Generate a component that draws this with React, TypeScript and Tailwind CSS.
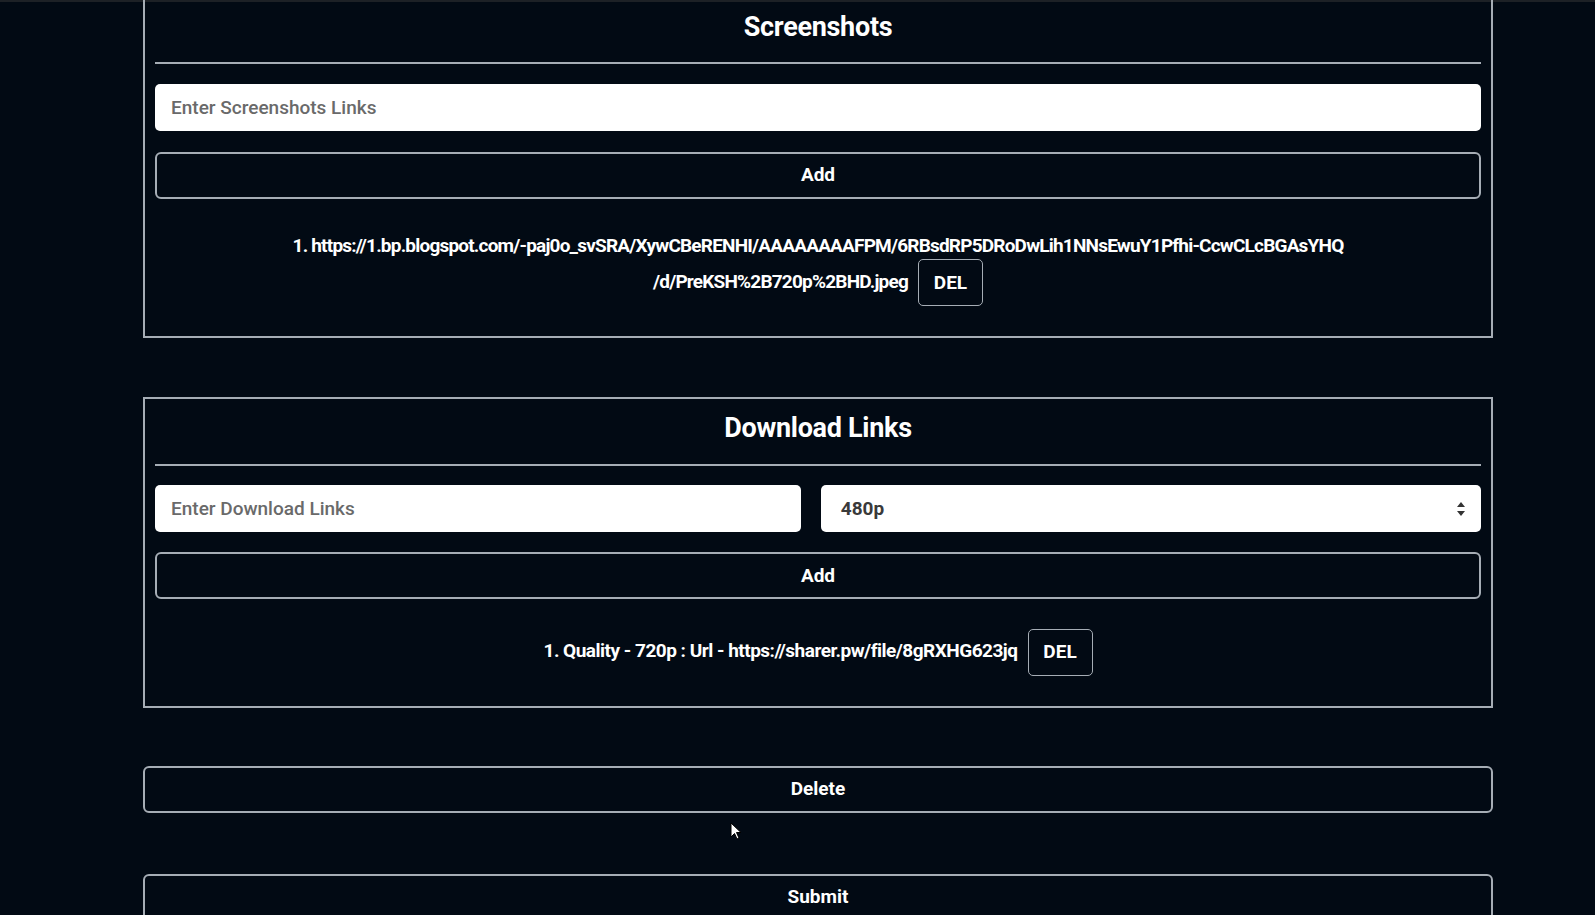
import React from "react";

interface DownloadLink {
  quality: string;
  url: string;
}

const screenshots: string[][] = [
  [
    "https://1.bp.blogspot.com/-paj0o_svSRA/XywCBeRENHI/AAAAAAAAFPM/6RBsdRP5DRoDwLih1NNsEwuY1Pfhi-CcwCLcBGAsYHQ",
    "/d/PreKSH%2B720p%2BHD.jpeg",
  ],
];

const downloads: DownloadLink[] = [{ quality: "720p", url: "https://sharer.pw/file/8gRXHG623jq" }];

function DelButton() {
  return (
    <button className="inline-flex items-center justify-center align-middle ml-[10px] -my-[6px] w-[65px] h-[47px] rounded-[5px] border border-[#a6adb5] text-[19px] font-bold tracking-normal text-white">
      DEL
    </button>
  );
}

export default function App() {
  return (
    <main className="min-h-[915px] w-full bg-[#020a14] text-white overflow-hidden relative font-['Roboto','Liberation_Sans',sans-serif]">
      <div className="h-[2px] bg-[#1d2126]" />
      <div className="ml-[143px] w-[1350px] -mt-[12px]">
        {/* screenshots */}
        <section className="border-2 border-[#a6adb5] px-[10px] pb-[36px]">
          <h2 className="text-center text-[27px] font-bold tracking-[-0.3px] leading-[34px] pt-[18px] pb-[18px]">Screenshots</h2>
          <hr className="border-t-2 border-[#a6adb5] mb-[20px]" />
          <input
            placeholder="Enter Screenshots Links"
            className="w-full h-[47px] rounded-[5px] bg-white px-4 text-[19px] font-medium text-black placeholder:text-[#6a6a6a] outline-none"
          />
          <button className="mt-[21px] w-full h-[47px] rounded-[6px] border-2 border-[#a6adb5] text-[19px] font-bold">
            Add
          </button>
          <div className="mt-[29px]">
            {screenshots.map((parts, i) => (
              <p key={parts[0]} className="text-center text-[19px] font-bold tracking-[-0.8px] leading-[36px]">
                {i + 1}. {parts[0]}
                <br />
                {parts[1]}
                <DelButton />
              </p>
            ))}
          </div>
        </section>

        {/* download links */}
        <section className="mt-[59px] border-2 border-[#a6adb5] px-[10px] pb-[36px]">
          <h2 className="text-center text-[27px] font-bold tracking-[-0.3px] leading-[34px] pt-[12px] pb-[19px]">Download Links</h2>
          <hr className="border-t-2 border-[#a6adb5] mb-[19px]" />
          <div className="flex gap-[20px]">
            <input
              placeholder="Enter Download Links"
              className="flex-[648] min-w-0 h-[47px] rounded-[5px] bg-white px-4 text-[19px] font-medium text-black placeholder:text-[#6a6a6a] outline-none"
            />
            <div className="flex-[660] h-[47px] rounded-[5px] bg-white flex items-center justify-between pl-[20px] pr-[15px] text-[19px] font-bold text-[#3a3a3a]">
              <span>480p</span>
              <svg width="10" height="16" viewBox="0 0 10 16">
                <path d="M5 1 L9 6 H1 Z M5 15 L9 10 H1 Z" fill="#333" />
              </svg>
            </div>
          </div>
          <button className="mt-[20px] w-full h-[47px] rounded-[6px] border-2 border-[#a6adb5] text-[19px] font-bold">
            Add
          </button>
          <div className="mt-[34px]">
            {downloads.map((d, i) => (
              <p key={d.url} className="text-center text-[19px] font-bold tracking-[-0.5px] leading-[36px]">
                {i + 1}. Quality - {d.quality} : Url - {d.url}
                <DelButton />
              </p>
            ))}
          </div>
        </section>

        <button className="mt-[58px] w-full h-[47px] rounded-[6px] border-2 border-[#a6adb5] text-[19px] font-bold">
          Delete
        </button>
        <button className="mt-[61px] w-full h-[47px] rounded-[6px] border-2 border-[#a6adb5] text-[19px] font-bold">
          Submit
        </button>
      </div>

      {/* mouse pointer */}
      <svg className="absolute left-[730px] top-[822px]" width="12" height="18" viewBox="0 0 12 18">
        <path d="M1 1 L1 15 L4.5 11.5 L7 17 L9 16 L6.5 10.5 L11 10.5 Z" fill="#fff" stroke="#000" strokeWidth="1" />
      </svg>
    </main>
  );
}
